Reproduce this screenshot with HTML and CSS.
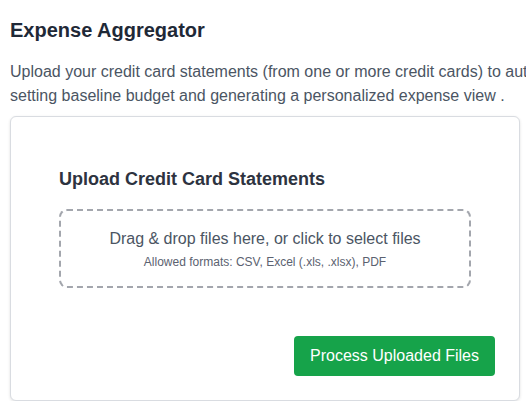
FILE: index.html
```html
<!DOCTYPE html>
<html lang="en">
<head>
<meta charset="utf-8">
<title>Expense Aggregator</title>
<link rel="stylesheet" href="styles.css">
</head>
<body>
<div class="page">
  <h1 class="title">Expense Aggregator</h1>
  <p class="intro">Upload your credit card statements (from one or more credit cards) to automate the process of setting baseline budget and generating a personalized expense view .</p>
  <div class="card">
    <section class="upload">
      <h2 class="upload-title">Upload Credit Card Statements</h2>
      <div class="dropzone">
        <p class="drop-main">Drag &amp; drop files here, or click to select files</p>
        <p class="drop-sub">Allowed formats: CSV, Excel (.xls, .xlsx), PDF</p>
      </div>
    </section>
    <div class="actions">
      <button class="btn-process" type="button">Process Uploaded Files</button>
    </div>
  </div>
</div>
</body>
</html>
```

FILE: styles.css
```css
html, body {
  margin: 0;
  padding: 0;
  overflow: hidden;
  background: #ffffff;
  font-family: "Liberation Sans", Arial, sans-serif;
}

.page {
  padding: 16px 10px 0 10px;
  width: 526px;
  box-sizing: border-box;
  overflow: hidden;
}

.title {
  margin: 0 0 16px 0;
  font-size: 20px;
  line-height: 28px;
  font-weight: 700;
  color: #1f2937;
}

.intro {
  margin: 0 0 8px 0;
  width: 700px;
  font-size: 16px;
  line-height: 24px;
  color: #4b5563;
}

.card {
  width: 510px;
  box-sizing: border-box;
  border: 1px solid #d9dce1;
  border-radius: 6px;
  box-shadow: 0 1px 3px rgba(0, 0, 0, 0.12);
  padding: 24px;
  background: #fff;
}

.upload {
  padding: 24px;
}

.upload-title {
  margin: 0 0 16px 0;
  font-size: 18px;
  line-height: 28px;
  font-weight: 700;
  color: #2d3340;
}

.dropzone {
  border: 2px dashed #a3a6ad;
  border-radius: 8px;
  padding: 16px;
  text-align: center;
}

.drop-main {
  margin: 0;
  font-size: 16px;
  line-height: 24px;
  color: #4b5563;
}

.drop-sub {
  margin: 3px 0 0 0;
  font-size: 12px;
  line-height: 16px;
  color: #5b6270;
}

.actions {
  display: flex;
  justify-content: flex-end;
  margin-top: 24px;
}

.btn-process {
  font-family: "Liberation Sans", Arial, sans-serif;
  font-size: 16px;
  line-height: 24px;
  padding: 8px 16px;
  border: none;
  border-radius: 4px;
  background: #16a34a;
  color: #ffffff;
  cursor: pointer;
}
```
